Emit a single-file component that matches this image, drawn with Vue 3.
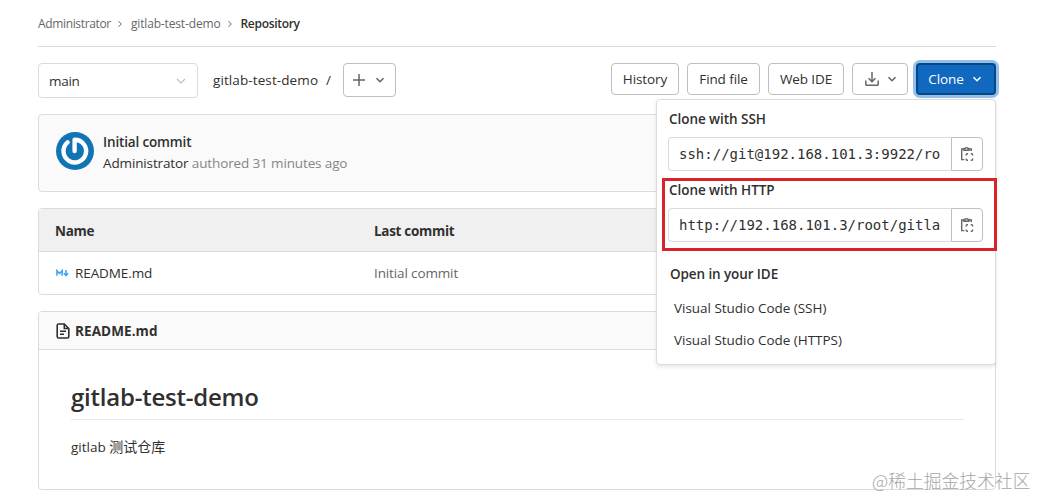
<script setup>
import { ref } from 'vue'

const crumbs = ['Administrator', 'gitlab-test-demo']
const actions = [
  { label: 'History', width: 68 },
  { label: 'Find file', width: 73 },
  { label: 'Web IDE', width: 76 },
]
const cloneUrls = [
  { title: 'Clone with SSH', url: 'ssh://git@192.168.101.3:9922/ro' },
  { title: 'Clone with HTTP', url: 'http://192.168.101.3/root/gitla' },
]
const editors = ['Visual Studio Code (SSH)', 'Visual Studio Code (HTTPS)']

const showClone = ref(true)
</script>

<template>
  <div class="page">
    <nav class="breadcrumb">
      <template v-for="c in crumbs" :key="c">
        <a class="crumb">{{ c }}</a>
        <svg class="sep" viewBox="0 0 8 8"><path d="M2.5 1.2 5.3 4 2.5 6.8" /></svg>
      </template>
      <strong>Repository</strong>
    </nav>

    <div class="toolbar">
      <div class="branch">
        <span>main</span>
        <svg class="chev light" viewBox="0 0 10 10"><path d="M1 3l4 4 4-4" /></svg>
      </div>
      <span class="path">gitlab-test-demo</span>
      <span class="slash">/</span>
      <button class="btn add">
        <svg class="plus" viewBox="0 0 12 12"><path d="M6 0v12M0 6h12" /></svg>
        <svg class="chev" viewBox="0 0 10 10"><path d="M1.5 3.2 5 6.7l3.5-3.5" /></svg>
      </button>
      <div class="actions">
        <button v-for="a in actions" :key="a.label" class="btn" :style="{ width: a.width + 'px' }">{{ a.label }}</button>
        <button class="btn download">
          <svg class="dl" viewBox="0 0 16 16">
            <path d="M8 1v9.5M4.6 7.3 8 10.7l3.4-3.4M1.8 9.5v3.7c0 .7.4 1.1 1.1 1.1h10.2c.7 0 1.1-.4 1.1-1.1V9.5" />
          </svg>
          <svg class="chev" viewBox="0 0 10 10"><path d="M1.5 3.2 5 6.7l3.5-3.5" /></svg>
        </button>
        <div class="clone-wrap">
          <button class="btn clone" @click="showClone = !showClone">
            <span>Clone</span>
            <svg class="chev" viewBox="0 0 10 10"><path d="M1.5 3.2 5 6.7l3.5-3.5" /></svg>
          </button>
          <div v-if="showClone" class="dropdown">
            <div v-for="c in cloneUrls" :key="c.title" class="clone-item">
              <div class="label">{{ c.title }}</div>
              <div class="field">
                <div class="url">{{ c.url }}</div>
                <div class="copy">
                  <svg viewBox="0 0 16 16">
                    <path d="M4.9 3H2.7v10.6h2.6M10.2 3h2.1v2" />
                    <path d="M5 4.3V2.5h1.2a1.4 1.4 0 0 1 2.6 0H10v1.8z" />
                    <path d="M7.2 9.6V8.7c0-.6.3-.9.9-.9H9M11.8 7.8h.9c.6 0 .9.3.9.9v.9M13.6 12.4v.9c0 .6-.3.9-.9.9h-.9M9 14.2h-.9c-.6 0-.9-.3-.9-.9v-.9" />
                  </svg>
                </div>
              </div>
            </div>
            <div class="label ide">Open in your IDE</div>
            <a v-for="e in editors" :key="e" class="editor">{{ e }}</a>
            <!-- red frame around the HTTP address -->
            <div class="mark"></div>
          </div>
        </div>
      </div>
    </div>

    <section class="box commit">
      <svg class="avatar" viewBox="0 0 38 38">
        <circle cx="19" cy="19" r="19" fill="#1074b5" />
        <path d="M11.6 10.4A11.3 11.3 0 1 0 18.6 7.8V19" fill="none" stroke="#fff" stroke-width="4.4" stroke-linecap="round" stroke-linejoin="round" />
      </svg>
      <div>
        <div class="commit-title">Initial commit</div>
        <div class="commit-meta"><span class="author">Administrator</span> authored 31 minutes ago</div>
      </div>
    </section>

    <section class="box files">
      <div class="row head"><span class="name">Name</span><span class="last">Last commit</span></div>
      <div class="row">
        <span class="name">
          <svg class="md" viewBox="0 0 14 8"><path d="M1 7V1.5L3.8 4.6 6.6 1.5V7M10.8.8v5M8.5 4.2l2.3 2.6 2.3-2.6" /></svg>
          <span class="filename">README.md</span>
        </span>
        <span class="last">Initial commit</span>
      </div>
    </section>

    <section class="box readme">
      <header>
        <svg class="doc" viewBox="0 0 14 16">
          <path d="M8.3 1H2.6C1.7 1 1.2 1.5 1.2 2.4v11.2c0 .9.5 1.4 1.4 1.4h8.8c.9 0 1.4-.5 1.4-1.4V5.5zM8.3 1v4.5h4.5M4 8.3h6M4 11.3h4" />
        </svg>
        <strong>README.md</strong>
      </header>
      <article>
        <h1>gitlab-test-demo</h1>
        <p><span>gitlab</span> 测试仓库</p>
      </article>
    </section>

    <div class="watermark">@稀土掘金技术社区</div>
  </div>
</template>

<style>
body {
  background: #fff;
}
</style>

<style scoped>
.page {
  position: relative;
  box-sizing: border-box;
  width: 1038px;
  height: 497px;
  padding: 0 42px 0 38px;
  overflow: hidden;
  font-family: "Open Sans", "Noto Sans CJK SC", sans-serif;
  font-size: 13.5px;
  line-height: 20px;
  color: #303030;
}

.page * {
  box-sizing: border-box;
}

svg {
  display: block;
  flex: none;
  fill: none;
  stroke: currentColor;
}

.breadcrumb {
  display: flex;
  align-items: center;
  height: 47px;
  padding-top: 2px;
  border-bottom: 1px solid #dbdbdb;
  font-size: 12px;
  color: #666;
}

.crumb {
  letter-spacing: -.35px;
}

.crumb ~ .crumb {
  letter-spacing: -.15px;
}

.breadcrumb strong {
  font-weight: 600;
  letter-spacing: -.3px;
  color: #303030;
}

.sep {
  width: 8px;
  height: 8px;
  margin: 0 7px 0 5px;
}

.toolbar {
  display: flex;
  align-items: flex-start;
  padding-top: 16px;
}

.branch {
  display: flex;
  align-items: center;
  justify-content: space-between;
  width: 160px;
  height: 35px;
  padding: 0 11px 0 10px;
  border: 1px solid #dbdbdb;
  border-radius: 4px;
}

.branch span {
  letter-spacing: -.3px;
}

.chev {
  width: 10px;
  height: 10px;
  stroke-width: 1.6;
}

.light {
  color: #bfbfbf;
  stroke-width: 1.2;
}

.path {
  width: 113px;
  margin: 7px 0 0 15px;
  letter-spacing: .1px;
}

.slash {
  width: 17px;
  margin-top: 7px;
}

.btn {
  display: flex;
  align-items: center;
  justify-content: center;
  height: 32px;
  padding: 0;
  border: 1px solid #bfbfbf;
  border-radius: 4px;
  background: #fff;
  font: inherit;
  letter-spacing: -.1px;
  color: #303030;
}

.add {
  gap: 10px;
  width: 53px;
  height: 34px;
  padding-right: 1px;
  color: #666;
}

.plus {
  width: 12px;
  height: 12px;
  stroke-width: 1.5;
}

.actions {
  display: flex;
  gap: 8px;
  margin-left: auto;
}

.download {
  gap: 7px;
  width: 56px;
  color: #666;
}

.dl {
  width: 16px;
  height: 16px;
  stroke-width: 1.5;
}

.clone-wrap {
  position: relative;
}

.clone {
  gap: 8px;
  width: 80px;
  padding-right: 2px;
  border: 2px solid #064787;
  background: #1068bf;
  box-shadow: 0 0 0 3px #92c0ea;
  color: #fff;
}

.dropdown {
  position: absolute;
  z-index: 2;
  top: 36px;
  right: 0;
  width: 340px;
  height: 266px;
  padding: 9px 12px 0 11px;
  border: 1px solid #dbdbdb;
  border-radius: 4px;
  background: #fff;
  box-shadow: 0 2px 4px rgba(0, 0, 0, .1);
}

.clone-item {
  height: 71px;
}

.label {
  font-weight: 600;
  letter-spacing: -.05px;
  padding-left: 1px;
}

.field {
  display: flex;
  width: 315px;
  height: 34px;
  margin-top: 8px;
}

.url {
  flex: 1;
  padding: 6px 0 0 10px;
  border: 1px solid #dbdbdb;
  border-right: 0;
  border-radius: 4px 0 0 4px;
  font-family: "DejaVu Sans Mono", monospace;
  font-size: 14px;
  white-space: nowrap;
}

.copy {
  display: flex;
  align-items: center;
  justify-content: center;
  width: 32px;
  border: 1px solid #bfbfbf;
  border-radius: 0 4px 4px 0;
  color: #666;
}

.copy svg {
  width: 16px;
  height: 16px;
  stroke-width: 1.4;
}

.ide {
  margin-top: 13px;
  padding-left: 2px;
  letter-spacing: -.1px;
}

.editor {
  display: block;
  height: 32px;
  padding-left: 6px;
  letter-spacing: -.03px;
}

.ide + .editor {
  margin-top: 14px;
}

.mark {
  position: absolute;
  top: 78px;
  left: 5px;
  width: 335px;
  height: 73px;
  border: 3px solid #d9222a;
}

.box {
  border: 1px solid #dbdbdb;
  border-radius: 4px;
}

.commit {
  display: flex;
  gap: 9px;
  height: 78px;
  margin-top: 16px;
  padding: 17px;
  background: #fafafa;
}

.avatar {
  width: 38px;
  height: 38px;
  stroke: none;
}

.commit-title {
  font-weight: 600;
  letter-spacing: -.15px;
}

.commit-meta {
  margin-top: 1px;
  letter-spacing: -.13px;
  color: #868686;
}

.author {
  color: #303030;
}

.files {
  height: 87px;
  margin-top: 16px;
}

.row {
  display: flex;
  align-items: center;
  height: 42px;
  padding-left: 16px;
}

.head {
  height: 43px;
  padding-top: 2px;
  border-bottom: 1px solid #dbdbdb;
  border-radius: 3px 3px 0 0;
  background: #f0f0f0;
  font-weight: 700;
  letter-spacing: -.3px;
}

.name {
  display: flex;
  align-items: center;
  width: 319px;
}

.row:not(.head) .last {
  letter-spacing: -.13px;
  color: #666;
}

.filename {
  letter-spacing: -.1px;
}

.md {
  width: 13px;
  height: 8px;
  margin: 0 6px 0 1px;
  stroke: #42a5f5;
  stroke-width: 1.7;
}

.readme {
  height: 179px;
  margin-top: 16px;
}

.readme header {
  display: flex;
  align-items: center;
  gap: 5px;
  height: 38px;
  padding-left: 17px;
  border-bottom: 1px solid #dbdbdb;
  border-radius: 3px 3px 0 0;
  background: #fafafa;
  letter-spacing: .1px;
}

.doc {
  width: 14px;
  height: 16px;
  stroke-width: 1.6;
}

article {
  padding: 31px 31px 0 32px;
}

h1 {
  height: 39px;
  margin: 0;
  border-bottom: 1px solid #eaeaea;
  font-size: 24px;
  font-weight: 600;
  line-height: 32px;
  letter-spacing: -.23px;
}

p {
  margin: 17px 0 0;
  font-size: 14px;
}

p span {
  font-size: 13.5px;
}

.watermark {
  position: absolute;
  top: 468px;
  left: 872px;
  font-family: "Noto Sans CJK SC", sans-serif;
  font-size: 17.8px;
  font-weight: 300;
  line-height: 24px;
  color: #a6a6a6;
  white-space: nowrap;
}
</style>
